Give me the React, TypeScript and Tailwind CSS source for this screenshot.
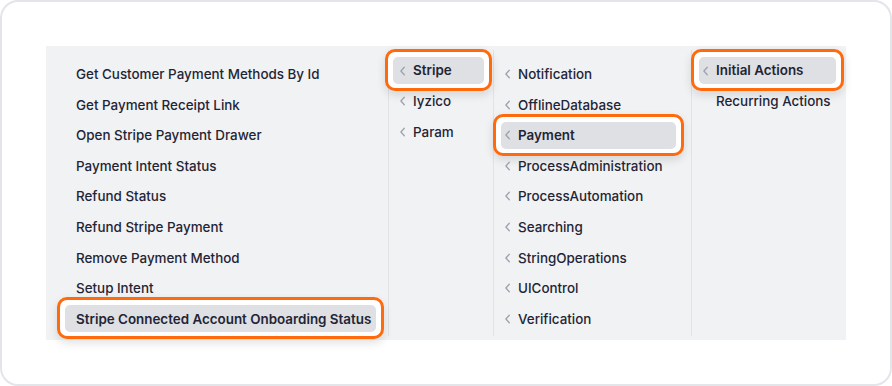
import React from "react";

type Item = { label: string; chevron?: boolean; active?: boolean };

const col1: Item[] = [
  { label: "Get Customer Payment Methods By Id" },
  { label: "Get Payment Receipt Link" },
  { label: "Open Stripe Payment Drawer" },
  { label: "Payment Intent Status" },
  { label: "Refund Status" },
  { label: "Refund Stripe Payment" },
  { label: "Remove Payment Method" },
  { label: "Setup Intent" },
  { label: "Stripe Connected Account Onboarding Status", active: true },
];

const col2: Item[] = [
  { label: "Stripe", chevron: true, active: true },
  { label: "Iyzico", chevron: true },
  { label: "Param", chevron: true },
];

const col3: Item[] = [
  { label: "Notification", chevron: true },
  { label: "OfflineDatabase", chevron: true },
  { label: "Payment", chevron: true, active: true },
  { label: "ProcessAdministration", chevron: true },
  { label: "ProcessAutomation", chevron: true },
  { label: "Searching", chevron: true },
  { label: "StringOperations", chevron: true },
  { label: "UIControl", chevron: true },
  { label: "Verification", chevron: true },
];

const col4: Item[] = [
  { label: "Initial Actions", chevron: true, active: true },
  { label: "Recurring Actions", chevron: false },
];

function Chevron() {
  return (
    <svg width="13" height="12" viewBox="0 0 13 12" fill="none" className="shrink-0">
      <path
        d="M4.3 2.2 L0.9 6 L4.3 9.8"
        stroke="#9ca3af"
        strokeWidth="1.3"
        strokeLinecap="round"
        strokeLinejoin="round"
      />
    </svg>
  );
}

function Row({ item, mode }: { item: Item; mode: "none" | "a" | "b" }) {
  const pad = mode === "none" ? "pl-[11px]" : mode === "a" ? "pl-[7px]" : "pl-[4px]";
  const inner = (
    <div
      className={`relative flex h-[27px] items-center rounded-[5px] ${
        item.active ? "bg-[#dfe0e4] font-semibold" : "font-medium"
      } ${pad} pr-[4px]`}
    >
      {mode !== "none" && (
        <span className="flex w-[13px] shrink-0 items-center">
          {item.chevron && <Chevron />}
        </span>
      )}
      <span className="whitespace-nowrap">{item.label}</span>
    </div>
  );
  if (!item.active) return inner;
  return (
    <div className="relative">
      <div className="absolute -top-[8px] -bottom-[7px] -left-[8px] -right-[8px] rounded-[10px] border-[3px] border-[#ff6a0d] bg-white shadow-[0_4px_10px_rgba(0,0,0,0.12)]" />
      {inner}
    </div>
  );
}

function Column({
  items,
  className,
  mode,
}: {
  items: Item[];
  className: string;
  mode: "none" | "a" | "b";
}) {
  return (
    <div className={`flex flex-col gap-[3.6px] ${className}`}>
      {items.map((it) => (
        <Row key={it.label} item={it} mode={mode} />
      ))}
    </div>
  );
}

export default function App() {
  return (
    <div
      className="h-[386px] w-[892px] bg-white"
      style={{ fontFamily: "Inter, 'Noto Sans', sans-serif" }}
    >
      <div className="h-full w-full rounded-[18px] border-2 border-[#e3e5e9] bg-white p-[44px]">
        <div className="flex h-[294px] w-[800px] bg-[#f1f2f4] py-[4px] text-[13.4px] text-[#1f2535]">
          <Column items={col1} mode="none" className="w-[342px] shrink-0 pl-[19px] pr-[12px] pt-[10.5px]" />
          <Column
            items={col2}
            mode="a"
            className="w-[105px] shrink-0 border-l border-[#e1e3e7] pl-[4px] pr-[9px] pt-[7px]"
          />
          <Column
            items={col3}
            mode="b"
            className="w-[198px] shrink-0 border-l border-[#e1e3e7] pl-[7px] pr-[15px] pt-[10.5px]"
          />
          <Column
            items={col4}
            mode="b"
            className="w-[155px] shrink-0 border-l border-[#e1e3e7] pl-[7px] pr-[10px] pt-[7px]"
          />
        </div>
      </div>
    </div>
  );
}
